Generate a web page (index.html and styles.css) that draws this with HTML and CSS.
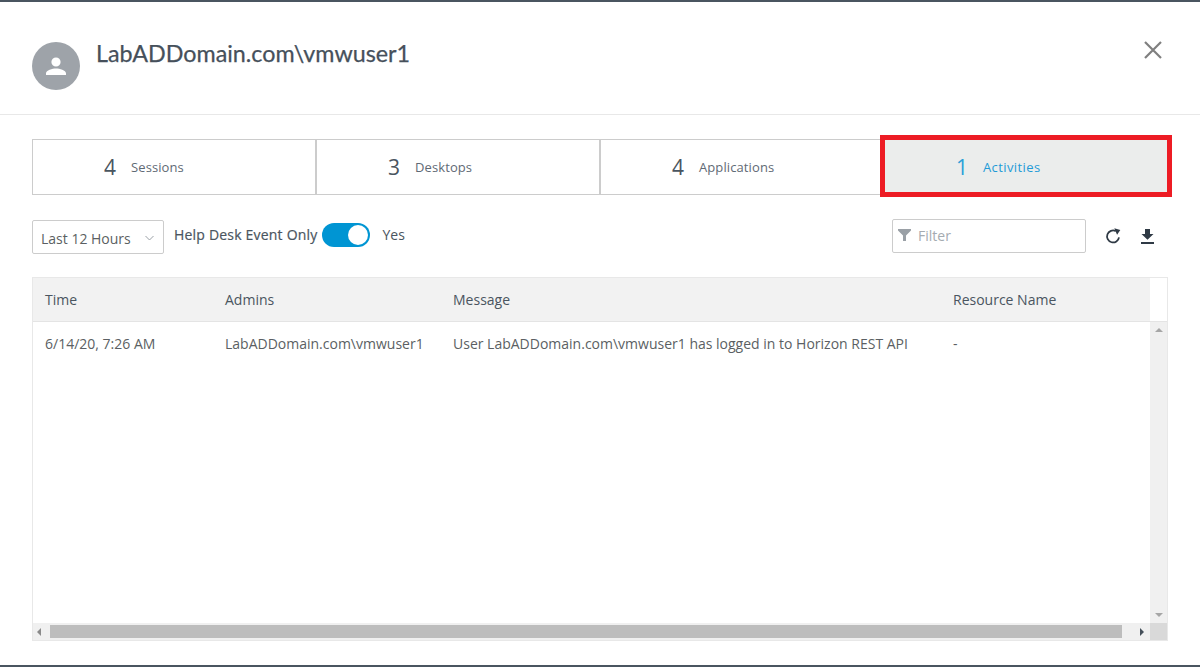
FILE: index.html
```html
<!DOCTYPE html>
<html>
<head>
    <meta charset="utf-8">
    <title>User details</title>
    <link rel="stylesheet" href="styles.css">
</head>
<body>
<div class="modal">
    <div class="modal-header">
        <div class="avatar">
            <svg width="24" height="24" viewBox="0 0 24 24"><path fill="#fff" d="M12 3.4a4.6 4.6 0 1 1 0 9.2 4.6 4.6 0 0 1 0-9.2zM2 19.2c0-3.1 6.4-4.8 10-4.8s10 1.7 10 4.800V21H2z"/></svg>
        </div>
        <h1 class="user-name">LabADDomain.com\vmwuser1</h1>
        <svg class="close-icon" width="18" height="18" viewBox="0 0 18 18"><path stroke="#7f7f7f" stroke-width="2.2" d="M1 1l16 16M17 1L1 17"/></svg>
    </div>
    <div class="modal-body">
        <div class="tabs">
            <div class="tab"><span class="tab-num">4</span><span class="tab-label">Sessions</span></div>
            <div class="tab"><span class="tab-num">3</span><span class="tab-label">Desktops</span></div>
            <div class="tab"><span class="tab-num">4</span><span class="tab-label">Applications</span></div>
            <div class="tab tab-active"><span class="tab-num">1</span><span class="tab-label">Activities</span></div>
            <div class="callout"></div>
        </div>
        <div class="toolbar">
            <div class="select">
                <span>Last 12 Hours</span>
                <svg width="9" height="6" viewBox="0 0 9 6"><path fill="none" stroke="#9aa0a6" d="M.5 1l4 4 4-4"/></svg>
            </div>
            <span class="switch-label">Help Desk Event Only</span>
            <div class="switch"><div class="switch-knob"></div></div>
            <span class="switch-value">Yes</span>
            <div class="filter">
                <svg width="13" height="12" viewBox="0 0 13 12"><path fill="#9aa0a6" d="M0 0h13v1.500L8 6.500V12H5V6.500L0 1.500z"/></svg>
                <span>Filter</span>
            </div>
            <svg class="refresh-icon" width="16" height="16" viewBox="0 0 16 16"><path fill="none" stroke="#2f3a45" stroke-width="1.800" d="M14 9.300A6 6 0 1 1 10.800 3.100"/><path fill="#2f3a45" d="M9.300 .3l6 1.700-3.200 4.800z"/></svg>
            <svg class="download-icon" width="13" height="15" viewBox="0 0 13 15"><path fill="#2f3a45" d="M4 0h5v5h3.500L6.500 10.800.5 5H4zM0 13h13v2H0z"/></svg>
        </div>
        <div class="grid">
            <div class="grid-main">
                <div class="grid-head">
                    <div class="col-time">Time</div>
                    <div class="col-admin">Admins</div>
                    <div class="col-msg">Message</div>
                    <div class="col-res">Resource Name</div>
                </div>
                <div class="grid-row">
                    <div class="col-time">6/14/20, 7:26 AM</div>
                    <div class="col-admin">LabADDomain.com\vmwuser1</div>
                    <div class="col-msg">User LabADDomain.com\vmwuser1 has logged in to Horizon REST API</div>
                    <div class="col-res">-</div>
                </div>
            </div>
            <div class="vscroll">
                <div class="vscroll-head"></div>
                <div class="vscroll-track">
                    <div class="arrow-up"></div>
                    <div class="arrow-down"></div>
                </div>
            </div>
            <div class="hscroll">
                <div class="arrow-left"></div>
                <div class="hscroll-thumb"></div>
                <div class="arrow-right"></div>
            </div>
            <div class="scroll-corner"></div>
        </div>
    </div>
</div>
</body>
</html>
```

FILE: styles.css
```css
html, body {
    margin: 0;
    height: 100%;
    overflow: hidden;
    background: #fff;
}

.modal {
    box-sizing: border-box;
    height: 667px;
    border-top: 2px solid #4a5560;
    border-bottom: 2px solid #4a5560;
    font-family: "Open Sans", "Liberation Sans", sans-serif;
    color: #4a5560;
    display: flex;
    flex-direction: column;
}

.modal-header {
    box-sizing: border-box;
    height: 113px;
    flex: none;
    padding: 40px 38px 0 32px;
    border-bottom: 1px solid #e8e8e8;
    display: flex;
    align-items: flex-start;
}

.avatar {
    width: 48px;
    height: 48px;
    border-radius: 50%;
    background: #9ea3a9;
    display: flex;
    align-items: center;
    justify-content: center;
}

.user-name {
    margin: -2px 0 0 16px;
    font-family: Lato, "Liberation Sans", sans-serif;
    font-weight: 400;
    font-size: 23.3px;
    line-height: 26px;
    color: #46505b;
    -webkit-text-stroke: .25px #46505b;
    flex: 1;
}

.close-icon {
    margin-top: -1px;
}

.modal-body {
    flex: 1;
    padding: 24px 32px 24px;
    display: flex;
    flex-direction: column;
    min-height: 0;
}

.tabs {
    position: relative;
    display: flex;
    height: 56px;
    width: 1136px;
    flex: none;
}

.tab {
    box-sizing: border-box;
    width: 284px;
    padding-left: 71px;
    border: 1px solid #ccc;
    border-left-width: 0;
    display: flex;
    align-items: center;
}

.tab:first-child {
    border-left-width: 1px;
}

.tab + .tab {
    border-left: 2px solid #ccc;
    margin-left: -1px;
    width: 285px;
}

.tab-num {
    font-size: 21px;
    width: 27px;
}

.tab-label {
    font-size: 13px;
    letter-spacing: .1px;
    color: #5f6a75;
}

.tab-active {
    background: #ebedec;
    color: #2ba0d8;
}

.tab-active .tab-label {
    color: #1f9bd7;
    letter-spacing: .4px;
}

.tab-active .tab-num {
    color: #2ba0d8;
}

.callout {
    position: absolute;
    left: 848px;
    top: -4px;
    width: 292px;
    height: 62px;
    box-sizing: border-box;
    border: 5px solid #ed1c24;
}

.toolbar {
    display: flex;
    align-items: center;
    margin-top: 24px;
    height: 34px;
    flex: none;
    font-size: 14px;
}

.select {
    box-sizing: border-box;
    width: 132px;
    height: 34px;
    margin-top: 1px;
    padding: 3px 9px 0 8px;
    border: 1px solid #ccc;
    border-radius: 2px;
    display: flex;
    align-items: center;
    justify-content: space-between;
    color: #5b5f63;
}

.switch-label {
    margin: -3px 5px 0 10px;
    letter-spacing: .2px;
    -webkit-text-stroke: .2px #4a5560;
    color: #4a5560;
}

.switch {
    box-sizing: border-box;
    width: 48px;
    height: 24px;
    margin-top: -2px;
    padding: 2px;
    border-radius: 12px;
    background: #0095d3;
    display: flex;
    justify-content: flex-end;
}

.switch-knob {
    width: 20px;
    height: 20px;
    border-radius: 50%;
    background: #fff;
}

.switch-value {
    margin: -3px 0 0 12px;
    flex: 1;
}

.filter {
    box-sizing: border-box;
    width: 194px;
    height: 34px;
    padding: 0 0 2px 5px;
    border: 1px solid #ccc;
    border-radius: 2px;
    display: flex;
    align-items: center;
    gap: 7px;
    color: #a5abb1;
}

.refresh-icon {
    margin-left: 19px;
}

.download-icon {
    margin: 0 14px 0 20px;
}

.grid {
    box-sizing: border-box;
    width: 1136px;
    height: 364px;
    margin-top: 24px;
    border: 1px solid #e8e8e8;
    display: grid;
    grid-template-columns: 1117px 17px;
    grid-template-rows: 345px 17px;
    font-size: 14px;
}

.grid-head, .grid-row {
    display: flex;
    padding-left: 12px;
    color: #4a5560;
}

.grid-head {
    height: 43px;
    line-height: 43px;
    background: #f2f2f2;
    border-bottom: 1px solid #e4e4e4;
}

.grid-row {
    height: 44px;
    line-height: 44px;
    color: #5b5f63;
}

.col-time { width: 180px; }
.col-admin { width: 228px; }
.col-msg { width: 500px; }

.vscroll {
    display: flex;
    flex-direction: column;
}

.vscroll-head {
    height: 43px;
    flex: none;
    border-bottom: 1px solid #e4e4e4;
}

.vscroll-track {
    flex: 1;
    background: #f0f0f0;
    display: flex;
    flex-direction: column;
    justify-content: space-between;
    align-items: center;
    padding: 6px 0;
}

.hscroll {
    background: #f0f0f0;
    display: flex;
    align-items: center;
    padding: 0 0 0 4px;
}

.hscroll-thumb {
    width: 1072px;
    height: 13px;
    margin: 0 18px 0 9px;
    background: #bdbdbd;
}

.scroll-corner {
    background: #d9d9d9;
}

.arrow-up {
    border: 4px solid transparent;
    border-top: 0;
    border-bottom: 4px solid #a6a6a6;
}

.arrow-down {
    border: 4px solid transparent;
    border-bottom: 0;
    border-top: 4px solid #a6a6a6;
}

.arrow-left {
    border: 4px solid transparent;
    border-left: 0;
    border-right: 4px solid #8a8a8a;
}

.arrow-right {
    border: 4px solid transparent;
    border-right: 0;
    border-left: 4px solid #45505a;
}
```
